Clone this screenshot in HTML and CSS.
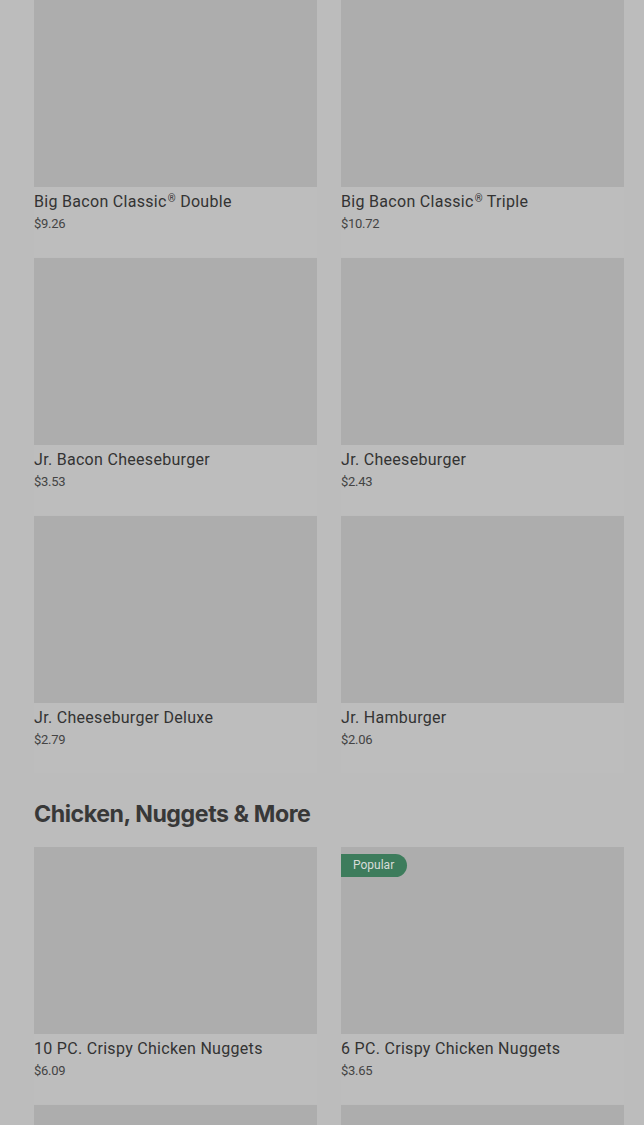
FILE: index.html
```html
<!DOCTYPE html>
<html>
<head>
<meta charset="utf-8">
<link rel="stylesheet" href="styles.css">
</head>
<body>
<main class="menu">
  <section class="section">
    <div class="grid">
      <div class="card"><div class="thumb"></div><div class="name">Big Bacon Classic<sup class="reg">®</sup> Double</div><div class="price">$9.26</div></div>
      <div class="card"><div class="thumb"></div><div class="name">Big Bacon Classic<sup class="reg">®</sup> Triple</div><div class="price">$10.72</div></div>
      <div class="card"><div class="thumb"></div><div class="name">Jr. Bacon Cheeseburger</div><div class="price">$3.53</div></div>
      <div class="card"><div class="thumb"></div><div class="name">Jr. Cheeseburger</div><div class="price">$2.43</div></div>
      <div class="card"><div class="thumb"></div><div class="name">Jr. Cheeseburger Deluxe</div><div class="price">$2.79</div></div>
      <div class="card"><div class="thumb"></div><div class="name">Jr. Hamburger</div><div class="price">$2.06</div></div>
    </div>
  </section>
  <section class="section">
    <h2 class="section-title">Chicken, Nuggets &amp; More</h2>
    <div class="grid">
      <div class="card"><div class="thumb"></div><div class="name">10 PC. Crispy Chicken Nuggets</div><div class="price">$6.09</div></div>
      <div class="card"><div class="thumb"><span class="badge">Popular</span></div><div class="name">6 PC. Crispy Chicken Nuggets</div><div class="price">$3.65</div></div>
      <div class="card"><div class="thumb"></div><div class="name">&nbsp;</div><div class="price">&nbsp;</div></div>
      <div class="card"><div class="thumb"></div><div class="name">&nbsp;</div><div class="price">&nbsp;</div></div>
    </div>
  </section>
</main>
</body>
</html>
```

FILE: styles.css
```css
html, body {
  margin: 0;
  padding: 0;
  background: #bcbcbc;
  overflow: hidden;
}
body {
  font-family: Roboto, "Liberation Sans", sans-serif;
  color: #333333;
}
.menu {
  padding: 0 20px 0 34px;
}
.section-title {
  margin: 26px 0 18px;
  font-family: Inter, "Liberation Sans", sans-serif;
  font-size: 23.2px;
  line-height: 30px;
  font-weight: 700;
  letter-spacing: -0.45px;
  color: #383838;
}
.grid {
  display: grid;
  grid-template-columns: 283px 283px;
  column-gap: 24px;
  row-gap: 1px;
}
.card {
  background: #bdbdbd;
  padding-bottom: 24px;
}
.thumb {
  position: relative;
  height: 187px;
  background: #adadad;
}
.name {
  margin-top: 5px;
  font-size: 16px;
  line-height: 20px;
  font-weight: 400;
  letter-spacing: 0.3px;
  color: #333333;
}
.reg {
  font-size: 10px;
  line-height: 0;
  vertical-align: 5px;
  margin-left: 1px;
}
.price {
  margin-top: 3px;
  font-size: 13px;
  line-height: 18px;
  color: #444444;
  letter-spacing: -0.3px;
}
.badge {
  position: absolute;
  left: 0;
  top: 7px;
  height: 23px;
  padding: 0 13px 0 12px;
  line-height: 23px;
  font-size: 12px;
  color: #d8dcd9;
  background: #3d7c5c;
  border-radius: 0 12px 12px 0;
}
```
